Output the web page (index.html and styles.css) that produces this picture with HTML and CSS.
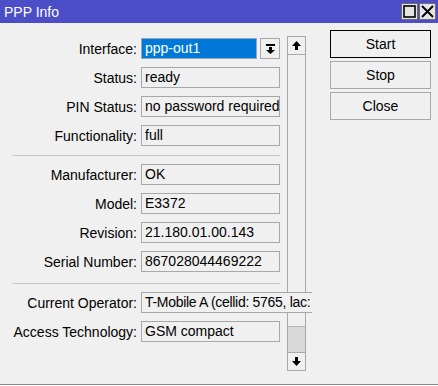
FILE: index.html
```html
<!DOCTYPE html>
<html lang="en">

<head>
    <meta charset="UTF-8">
    <meta name="viewport" content="width=device-width, initial-scale=1.0">
    <title>PPP Info</title>
    <link rel="stylesheet" href="styles.css">
</head>

<body>
    <div class="window">
        <div class="titlebar">
            <span class="title">PPP Info</span>
            <div class="title-buttons">
                <span class="tbtn">
                    <svg width="13" height="13" viewBox="0 0 13 13"><rect x="1" y="1" width="11" height="11" fill="none" stroke="#000" stroke-width="1.6"/></svg>
                </span>
                <span class="tbtn">
                    <svg width="13" height="13" viewBox="0 0 13 13"><path d="M1 1 L12 12 M12 1 L1 12" stroke="#000" stroke-width="1.8"/></svg>
                </span>
            </div>
        </div>

        <div class="content">
            <div class="form">
                <div class="row">
                    <label class="label">Interface:</label>
                    <div class="combo">
                        <span class="field selected">ppp-out1</span>
                        <span class="drop-btn">
                            <svg width="9" height="10" viewBox="0 0 9 10"><rect x="0" y="0" width="9" height="2" fill="#000"/><path d="M3 3 H6 V6 H9 L4.5 10 L0 6 H3 Z" fill="#000"/></svg>
                        </span>
                    </div>
                </div>
                <div class="row">
                    <label class="label">Status:</label>
                    <span class="field">ready</span>
                </div>
                <div class="row">
                    <label class="label">PIN Status:</label>
                    <span class="field">no password required</span>
                </div>
                <div class="row">
                    <label class="label">Functionality:</label>
                    <span class="field">full</span>
                </div>

                <div class="sep"></div>

                <div class="row">
                    <label class="label">Manufacturer:</label>
                    <span class="field">OK</span>
                </div>
                <div class="row">
                    <label class="label">Model:</label>
                    <span class="field">E3372</span>
                </div>
                <div class="row">
                    <label class="label">Revision:</label>
                    <span class="field">21.180.01.00.143</span>
                </div>
                <div class="row">
                    <label class="label">Serial Number:</label>
                    <span class="field">867028044469222</span>
                </div>

                <div class="sep sep-last"></div>

                <div class="row">
                    <label class="label">Current Operator:</label>
                    <span class="field wide">T-Mobile A (cellid: 5765, lac:</span>
                </div>
                <div class="row">
                    <label class="label">Access Technology:</label>
                    <span class="field">GSM compact</span>
                </div>
            </div>

            <div class="scrollbar">
                <span class="sb-btn">
                    <svg width="9" height="9" viewBox="0 0 9 9"><path d="M4.5 0 L9 5 H6 V9 H3 V5 H0 Z" fill="#000"/></svg>
                </span>
                <div class="sb-track">
                    <div class="sb-thumb"></div>
                </div>
                <span class="sb-btn">
                    <svg width="9" height="9" viewBox="0 0 9 9"><path d="M3 0 H6 V4 H9 L4.5 9 L0 4 H3 Z" fill="#000"/></svg>
                </span>
            </div>

            <div class="actions">
                <button class="btn default">Start</button>
                <button class="btn">Stop</button>
                <button class="btn">Close</button>
            </div>
        </div>
    </div>
</body>

</html>
```

FILE: styles.css
```css
body {
    margin: 0;
    font-family: "Liberation Sans", Arial, sans-serif;
    font-size: 14px;
    color: #000;
}

.window {
    width: 438px;
    height: 385px;
    box-sizing: border-box;
    background-color: #f0f0f0;
    border-bottom: 1px solid #8c8c8c;
    display: flex;
    flex-direction: column;
}

.titlebar {
    height: 23px;
    background-color: #4b4ec6;
    display: flex;
    align-items: center;
    justify-content: space-between;
    padding: 0 2px 0 4px;
}

.title {
    color: white;
    font-size: 14px;
}

.title-buttons {
    display: flex;
    gap: 1px;
}

.tbtn {
    width: 17px;
    height: 17px;
    box-sizing: border-box;
    background-color: #e4e4e4;
    border: 1px solid #6d6d6d;
    display: flex;
    align-items: center;
    justify-content: center;
}

.content {
    display: flex;
    align-items: flex-start;
}

/* flex column so row and separator margins don't collapse */
.form {
    width: 287px;
    flex-shrink: 0;
    padding-top: 15px;
    display: flex;
    flex-direction: column;
}

.row {
    display: flex;
    align-items: center;
    margin-bottom: 8px;
}

.label {
    width: 137px;
    flex-shrink: 0;
    margin-right: 4px;
    text-align: right;
    white-space: nowrap;
}

.field {
    width: 139px;
    height: 21px;
    flex-shrink: 0;
    box-sizing: border-box;
    border: 1px solid #a8a8a8;
    padding: 0 3px;
    line-height: 19px;
    white-space: nowrap;
    overflow: hidden;
}

.combo {
    display: flex;
    gap: 3px;
}

.field.selected {
    width: 116px;
    background-color: #0078d7;
    border-color: #8fa9c4;
    color: white;
}

.drop-btn {
    width: 20px;
    height: 21px;
    box-sizing: border-box;
    border: 1px solid #a8a8a8;
    display: flex;
    align-items: center;
    justify-content: center;
}

.field.wide {
    width: 171px;
    position: relative;
    z-index: 1;
    background-color: #f0f0f0;
    border-right: none;
    letter-spacing: -0.3px;
}

.sep {
    height: 1px;
    background-color: #c6c6c6;
    margin: 1px 7px 8px 12px;
}

.sep-last {
    margin-top: 3px;
}

.scrollbar {
    width: 19px;
    height: 335px;
    flex-shrink: 0;
    margin-top: 13px;
    display: flex;
    flex-direction: column;
}

.sb-btn {
    height: 19px;
    box-sizing: border-box;
    border: 1px solid #a8a8a8;
    display: flex;
    align-items: center;
    justify-content: center;
}

.sb-track {
    flex: 1;
    border-left: 1px solid #a8a8a8;
    border-right: 1px solid #a8a8a8;
    display: flex;
    flex-direction: column;
    justify-content: flex-end;
}

.sb-thumb {
    height: 25px;
    background-color: #d9d9d9;
    border-top: 1px solid #b4b4b4;
}

.actions {
    margin-top: 7px;
    margin-left: 24px;
    display: flex;
    flex-direction: column;
    gap: 3px;
}

.btn {
    width: 101px;
    height: 28px;
    background-color: #f0f0f0;
    border: 1px solid #a8a8a8;
    font-family: "Liberation Sans", Arial, sans-serif;
    font-size: 14px;
    color: #000;
    padding: 0;
}

.btn.default {
    border-color: #000;
}
```
